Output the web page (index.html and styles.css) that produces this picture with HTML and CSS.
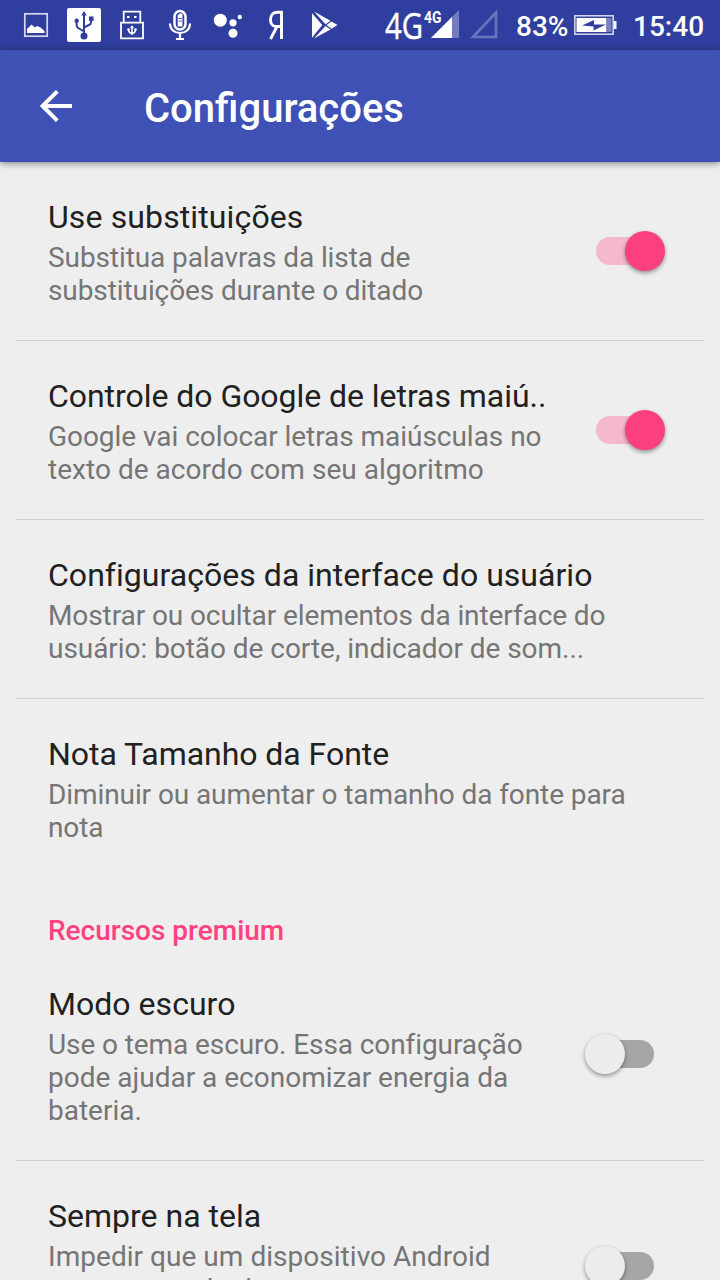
FILE: index.html
```html
<!DOCTYPE html>
<html lang="pt-BR">
<head>
<meta charset="utf-8">
<title>Configurações</title>
<link rel="stylesheet" href="styles.css">
</head>
<body>
<div class="screen">
  <header class="status">
    <svg class="status-icons" width="350" height="50" viewBox="0 0 350 50" fill="#fff">
      <rect x="24.800" y="13.800" width="22.400" height="22.400" fill="none" stroke="#d5d8ee" stroke-width="1.700"/>
      <path d="M27 33v-4l4.500-4.500 3.500 3 2-1.500 3.500 1.500 4 3.500v2z"/>
      <rect x="67" y="8" width="34" height="34" rx="2"/>
      <g fill="none" stroke="#303f9f" stroke-width="2">
        <path d="M84 36V13M84 31.500L77.500 27.500Q76.500 26.500 76.500 21M84 27.500L90 24.500Q91.300 23.500 91.300 19"/>
      </g>
      <path fill="#303f9f" d="M84 11l2.800 4.500h-5.600zM89 16.500h4.500V21H89z"/>
      <circle fill="#303f9f" cx="76.700" cy="20.800" r="2.200"/><circle fill="#303f9f" cx="84" cy="36" r="3.500"/>
      <path d="M123.700 22V11.700h16.600V22M121 22.700h22v15.600h-22z" fill="none" stroke="#fff" stroke-width="1.800"/>
      <path d="M127 16h2.500v2H127zM134 16h2.500v2H134z"/>
      <path d="M132 35V27M132 33.500q-3.500-.5-3.500-4M132 33.500q3.500-.5 3.500-4" stroke="#fff" stroke-width="1.600" fill="none"/>
      <path d="M132 25.200l2 2.800h-4z"/><circle cx="128.500" cy="29.500" r="1.300"/><circle cx="135.500" cy="29.500" r="1.300"/>
      <rect x="174.500" y="11" width="11" height="18.500" rx="5.500" fill="none" stroke="#fff" stroke-width="2.500"/>
      <path d="M177.700 15.500l1.800-2h3v13h-4.800z"/>
      <path d="M178.500 18.500h3.500M178.500 21.200h3.500" stroke="#303f9f" stroke-width=".8"/>
      <path d="M170 23.500c0 6 4.500 9.500 10 9.500s10-3.500 10-9.500M180 33v6M176 39h8" fill="none" stroke="#fff" stroke-width="2.200"/>
      <circle cx="220.300" cy="20.200" r="6.500"/><circle cx="233" cy="22.800" r="3.600"/><circle cx="239.800" cy="17" r="2.200"/><circle cx="233" cy="33.300" r="4.500"/>
      <path d="M281.500 39V12.300h-4.500c-4.500 0-6.500 3.500-6.500 7.500 0 4.500 2.500 6.700 5.500 6.700h5.500M277 26.500L270.500 39" fill="none" stroke="#fff" stroke-width="2.900"/>
      <path d="M312 13.200L322.300 25 312 37.800zM314 11.500l16.500 9.300-5 3.500zM325.500 26l5 3.500L314 38.500zM326.500 25l5-3.500 6 3.500-6 3.800z"/>
    </svg>
    <svg class="signal" width="130" height="50" viewBox="370 0 130 50" fill="#fff">
      <text x="385" y="38.500" class="net" textLength="38" lengthAdjust="spacingAndGlyphs">4G</text>
      <text x="424" y="22.500" class="net-small" textLength="17.500" lengthAdjust="spacingAndGlyphs">4G</text>
      <path d="M459 10v28h-28z" opacity=".32"/><path d="M452 17v21h-21z"/>
      <path d="M496 12.500V37h-23z" fill="none" stroke="#6976bb" stroke-width="2.600"/>
    </svg>
    <span class="percent">83%</span>
    <svg class="battery" width="44" height="20" viewBox="0 0 44 20">
      <rect x=".8" y=".8" width="38.400" height="18.400" fill="none" stroke="#d8dbef" stroke-width="1.500"/>
      <path d="M40 6h2.500v8H40z" fill="#fff"/><path d="M2.500 3h30v14h-30z" fill="#fff"/><path d="M32.500 3h5v14h-5z" fill="#7781c2"/>
      <path d="M8 10.500l12-5.500v4.500l12 0-12.500 6v-4z" fill="#303f9f"/>
    </svg>
    <span class="clock">15:40</span>
  </header>
  <div class="toolbar">
    <svg class="back" width="32" height="32" viewBox="0 0 32 32" fill="none" stroke="#fff" stroke-width="3.900"><path d="M32 16H3M17.300 1.300L2.600 16l14.700 14.700"/></svg>
    <h1 class="heading">Configurações</h1>
  </div>
  <main class="list">
    <section class="row">
      <div class="copy"><h2 class="title wide">Use substituições</h2><p class="summary tight">Substitua palavras da lista de<br>substituições durante o ditado</p></div>
      <div class="switch on"><i class="track"></i><i class="thumb"></i></div>
    </section>
    <section class="row">
      <div class="copy"><h2 class="title snug">Controle do Google de letras maiú..</h2><p class="summary"><span class="snug">Google vai colocar letras maiúsculas no</span><br><span class="loose">texto de acordo com seu algoritmo</span></p></div>
      <div class="switch on"><i class="track"></i><i class="thumb"></i></div>
    </section>
    <section class="row">
      <div class="copy"><h2 class="title loose">Configurações da interface do usuário</h2><p class="summary"><span class="tight">Mostrar ou ocultar elementos da interface do</span><br><span class="snug">usuário: botão de corte, indicador de som...</span></p></div>
    </section>
    <section class="row last">
      <div class="copy"><h2 class="title snug">Nota Tamanho da Fonte</h2><p class="summary tight">Diminuir ou aumentar o tamanho da fonte para<br>nota</p></div>
    </section>
    <h3 class="category">Recursos premium</h3>
    <section class="row premium">
      <div class="copy"><h2 class="title loose">Modo escuro</h2><p class="summary"><span class="tight">Use o tema escuro. Essa configuração</span><br>pode ajudar a economizar energia da<br>bateria.</p></div>
      <div class="switch"><i class="track"></i><i class="thumb"></i></div>
    </section>
    <section class="row premium last">
      <div class="copy"><h2 class="title">Sempre na tela</h2><p class="summary"><span class="loose">Impedir que um dispositivo Android</span><br>entre no modo de</p></div>
      <div class="switch"><i class="track"></i><i class="thumb"></i></div>
    </section>
  </main>
</div>
</body>
</html>
```
FILE: styles.css
```css
* { box-sizing: border-box; }
body, h1, h2, h3, p { margin: 0; }
body { font-family: Roboto, "Noto Sans", sans-serif; background: #eee; }
.screen { width: 720px; height: 1280px; overflow: hidden; display: flex; flex-direction: column; background: #eee; }
.status { height: 50px; flex: none; background: #303f9f; color: #fff; display: flex; align-items: center; }
.status-icons { margin-right: 20px; flex: none; }
.signal { flex: none; }
.net { font: 36px "Open Sans", sans-serif; stroke: #fff; stroke-width: .5px; }
.net-small { font: bold 16px Roboto, sans-serif; }
.percent, .clock { font-size: 28px; font-weight: 500; line-height: 32px; padding-top: 3px; white-space: nowrap; }
.percent { width: 58px; margin-left: 16px; }
.battery { flex: none; }
.clock { margin-left: 15px; }
.toolbar { height: 112px; flex: none; background: #3f51b5; color: #fff; display: flex; align-items: center; padding: 0 40px; gap: 72px; box-shadow: 0 1px 7px rgba(0,0,0,.5); z-index: 1; }
.back { flex: none; }
.heading { font-size: 40px; font-weight: 500; line-height: 48px; padding-top: 5px; }
.list { display: flex; flex-direction: column; flex: none; }
.row { display: flex; justify-content: space-between; align-items: flex-start; height: 179px; margin: 0 16px; padding: 36px 32px 0; border-bottom: 1px solid #d0d0d0; }
.row.last { border-color: transparent; }
.row.premium { height: 212px; }
.copy { white-space: nowrap; }
.title { font-size: 32px; font-weight: 400; line-height: 38px; color: #212121; }
.summary { font-size: 28px; line-height: 33px; color: #757575; padding-top: 5px; }
.wide { letter-spacing: .12px; }
.loose { letter-spacing: .035px; }
.snug { letter-spacing: -.045px; }
.tight { letter-spacing: -.09px; }
.category { font-size: 28px; font-weight: 500; line-height: 33px; color: #ff4081; padding: 36px 48px 2px; }
.switch { position: relative; width: 69px; height: 40px; margin: 33px 7px 0 0; flex: none; display: flex; align-items: center; }
.track { width: 58px; height: 28px; border-radius: 14px; background: #f5b9cf; }
.thumb { position: absolute; right: 0; top: 0; width: 40px; height: 40px; border-radius: 50%; background: #fc407f; box-shadow: 0 2px 4px rgba(0,0,0,.4); }
.switch:not(.on) { margin: 49px 18px 0 0; justify-content: flex-end; }
.switch:not(.on) .track { background: #a6a6a6; }
.switch:not(.on) .thumb { right: auto; left: 0; background: #ececec; }
```
